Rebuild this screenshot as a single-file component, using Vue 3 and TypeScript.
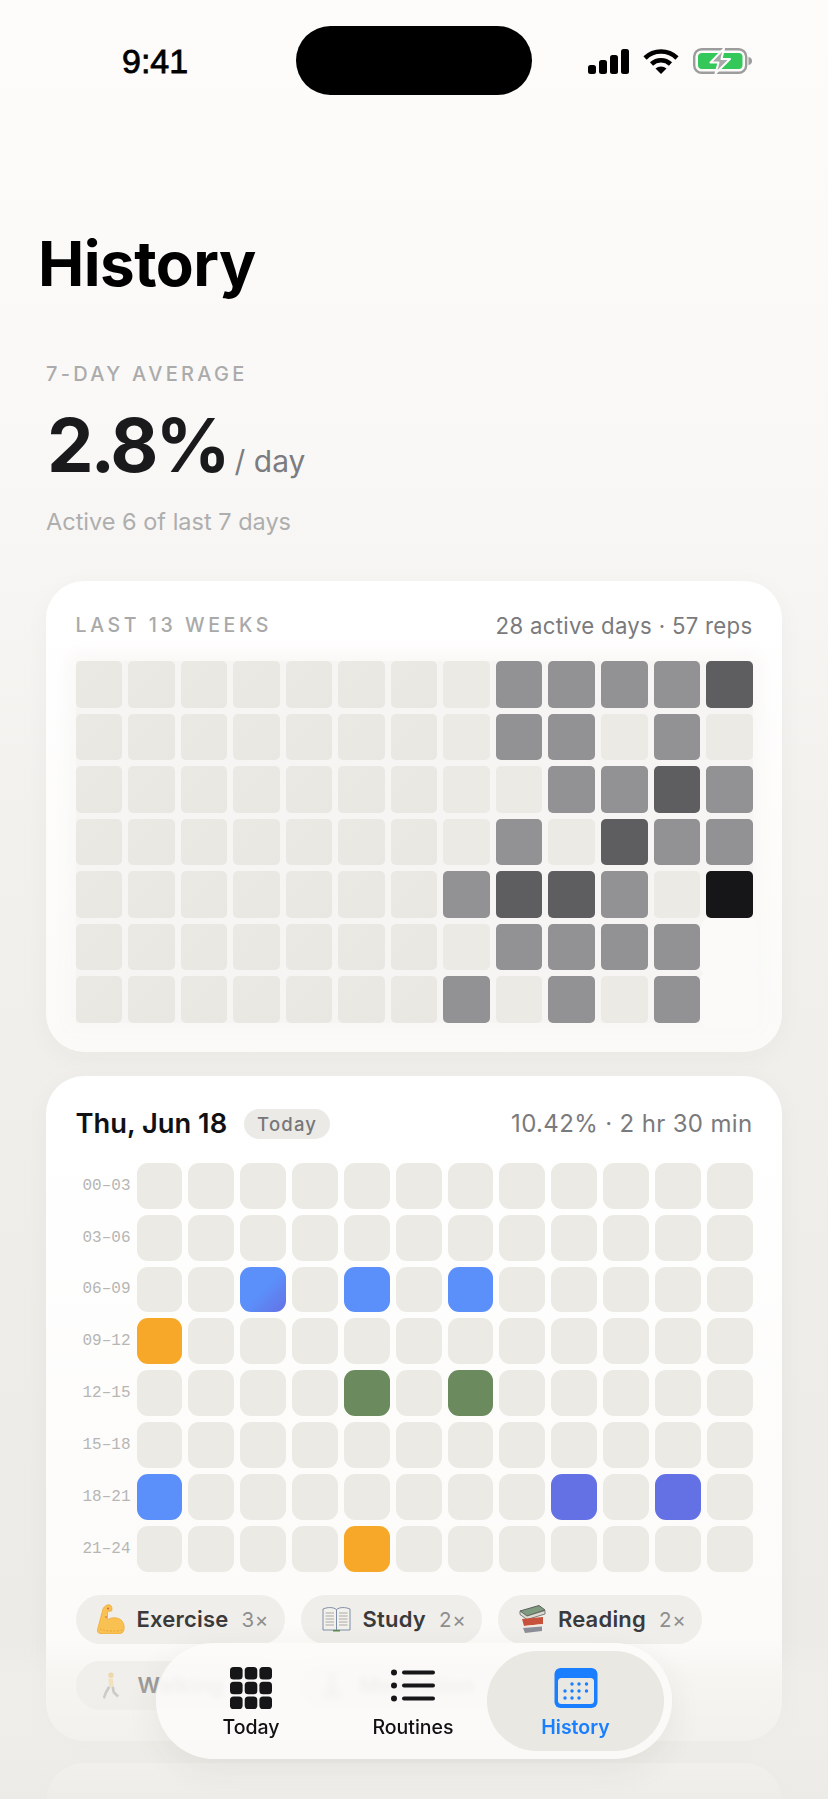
<script setup lang="ts">
const weekRows: string[] = [
  '.......emmmmd',
  '.......emmeme',
  '.......eemmdm',
  '.......emedmm',
  '.......mddmek',
  '.......emmmm ',
  '.......memem ',
]

const hourLabels: string[] = ['00–03', '03–06', '06–09', '09–12', '12–15', '15–18', '18–21', '21–24']

// one letter per slot: b blue, g gradient, o orange, s green, i indigo
const hourRows: string[] = [
  '............',
  '............',
  '..g.b.b.....',
  'o...........',
  '....s.s.....',
  '............',
  'b.......i.i.',
  '....o.......',
]

const kinds: Record<string, string> = {
  '.': 'none', e: 'light', m: 'mid', d: 'dark', k: 'black', ' ': 'blank',
  b: 'blue', g: 'mix', o: 'orange', s: 'green', i: 'indigo',
}

const kind = (ch: string): string => kinds[ch] ?? 'none'
</script>

<template>
  <div class="page">
    <div class="status">
      <span class="clock">9:41</span>
      <div class="island"></div>
      <div class="status-icons">
        <svg width="41" height="25" viewBox="0 0 41 25">
          <rect x="0" y="16" width="8" height="9" rx="2.5" />
          <rect x="11" y="11" width="8" height="14" rx="2.5" />
          <rect x="22" y="6" width="8" height="19" rx="2.5" />
          <rect x="33" y="0" width="8" height="25" rx="2.5" />
        </svg>
        <svg width="36" height="25" viewBox="0 0 36 25">
          <path d="M2 9 A23 23 0 0 1 34 9" fill="none" stroke="#000" stroke-width="4.6" />
          <path d="M8.5 15 A14 14 0 0 1 27.5 15" fill="none" stroke="#000" stroke-width="4.6" />
          <path d="M18 25 L12.5 19.6 A8 8 0 0 1 23.5 19.6 Z" />
        </svg>
        <svg width="60" height="26" viewBox="0 0 60 26">
          <rect x="1.2" y="1.2" width="52" height="23.6" rx="7.5" fill="none" stroke="#9c9c9c" stroke-width="2.4" />
          <rect x="5" y="5" width="44.5" height="16" rx="4" fill="#34c759" />
          <path d="M55.5 9 C58 9.5 59 11 59 13 C59 15 58 16.5 55.5 17 Z" fill="#9c9c9c" />
          <path d="M31 0.5 L17.5 14.5 H25.5 L22.5 25.5 L37 11 H28.5 Z" fill="#a9a9a9" stroke="#fdfcfb" stroke-width="2" stroke-linejoin="round" />
        </svg>
      </div>
    </div>

    <h1 class="title">History</h1>

    <section class="summary">
      <div class="eyebrow">7-DAY AVERAGE</div>
      <div class="avg"><span class="avg-num">2.8%</span><span class="avg-unit">/ day</span></div>
      <div class="avg-note">Active 6 of last 7 days</div>
    </section>

    <section class="card weeks">
      <header class="card-head">
        <span class="weeks-title">LAST 13 WEEKS</span>
        <span class="meta">28 active days · 57 reps</span>
      </header>
      <div class="week-grid">
        <template v-for="(row, r) in weekRows" :key="r">
          <div v-for="(ch, c) in row.split('')" :key="c" class="wcell" :class="kind(ch)"></div>
        </template>
      </div>
    </section>

    <section class="card day">
      <header class="card-head">
        <div class="day-left">
          <span class="day-title">Thu, Jun 18</span>
          <span class="badge">Today</span>
        </div>
        <span class="meta day-meta">10.42% · 2 hr 30 min</span>
      </header>
      <div class="hour-grid">
        <template v-for="(row, r) in hourRows" :key="r">
          <span class="hour-label">{{ hourLabels[r] }}</span>
          <div v-for="(ch, c) in row.split('')" :key="c" class="hcell" :class="kind(ch)"></div>
        </template>
      </div>
      <div class="chips">
        <div class="chip">
          <svg class="chip-icon" width="28" height="30" viewBox="0 0 28 30">
            <path d="M6 5 C7 2 11 0 13 1 C15 2 15.5 5 14.5 7 C13 7.5 11.5 7 10.5 8 L10.5 16 C14 13 20 13 24 16 C27.5 19 28 25 26 28 C25 29.5 22 30 18 30 L3 29.5 C0.5 29 0 27 0.7 25 Z" fill="#f8c152" stroke="#eeaa38" stroke-width="0.8" />
            <circle cx="11" cy="4.5" r="0.9" fill="#d9553a" />
            <circle cx="9" cy="13" r="0.8" fill="#d9553a" />
            <path d="M3 25 C8 27 18 28 25 26" fill="none" stroke="#e89a2c" stroke-width="0.9" stroke-dasharray="1.5 2" />
          </svg>
          <span class="chip-name">Exercise</span><span class="chip-count">3×</span>
        </div>
        <div class="chip">
          <svg class="chip-icon" width="29" height="26" viewBox="0 0 29 26">
            <path d="M1 3 C6 1 11 1 14.5 3.5 V24 H1 Z" fill="#f3f1ec" stroke="#7f8ea8" stroke-width="1" />
            <path d="M28 3 C23 1 18 1 14.5 3.5 V24 H28 Z" fill="#f3f1ec" stroke="#7f8ea8" stroke-width="1" />
            <path d="M3.5 7 H12 M3.5 10 H12 M3.5 13 H12 M3.5 16 H12 M3.5 19 H12 M17 7 H25.5 M17 10 H25.5 M17 13 H25.5 M17 16 H25.5 M17 19 H25.5" stroke="#a9a9a6" stroke-width="1" />
            <path d="M11 24 H18 V25.5 H11 Z" fill="#5c8a4a" />
          </svg>
          <span class="chip-name">Study</span><span class="chip-count">2×</span>
        </div>
        <div class="chip">
          <svg class="chip-icon" width="27" height="28" viewBox="0 0 27 28">
            <path d="M1 6 L20 0.5 L26 5 L8 11 Z" fill="#7f9c80" stroke="#5c5f5c" stroke-width="1" />
            <path d="M8 11 L26 5.5 V9 L8 14.5 L1 9.5 V6 Z" fill="#dedbd2" stroke="#5c5f5c" stroke-width="0.8" />
            <path d="M3 14 L24 12 V19 L5 21 Z" fill="#c8513c" />
            <path d="M5 21 L24 19 V21 L6 23 Z" fill="#efe9df" />
            <path d="M4 23 L23 21.5 V26 L6 28 Z" fill="#8d8f98" />
          </svg>
          <span class="chip-name">Reading</span><span class="chip-count">2×</span>
        </div>
        <div class="chip">
          <svg class="chip-icon walker" width="16" height="30" viewBox="0 0 18 30">
            <circle cx="9" cy="4" r="3" fill="#e9bf6c" />
            <path d="M6 8 H11 L12 17 H7 Z" fill="#f0d28a" />
            <path d="M7 17 L3 24 L1 30 M11 17 L12 23 L17 28" fill="none" stroke="#9b9b9b" stroke-width="3" />
          </svg>
          <span class="chip-name">Walking</span><span class="chip-count">2×</span>
        </div>
        <div class="chip">
          <svg class="chip-icon" width="30" height="30" viewBox="0 0 30 30">
            <circle cx="15" cy="6" r="4.5" fill="#9a9a96" />
            <path d="M11 11 H19 L22 21 L29 27 Q15 32 1 27 L8 21 Z" fill="#9a9a96" />
          </svg>
          <span class="chip-name">Meditation</span><span class="chip-count">1×</span>
        </div>
      </div>
    </section>

    <section class="card rest"></section>

    <div class="fade"></div>

    <nav class="tabs">
      <div class="tab">
        <svg width="42" height="42" viewBox="0 0 42 42" fill="#161618">
          <rect x="0" y="0" width="12.6" height="12.6" rx="3.6" />
          <rect x="14.7" y="0" width="12.6" height="12.6" rx="3.6" />
          <rect x="29.4" y="0" width="12.6" height="12.6" rx="3.6" />
          <rect x="0" y="14.7" width="12.6" height="12.6" rx="3.6" />
          <rect x="14.7" y="14.7" width="12.6" height="12.6" rx="3.6" />
          <rect x="29.4" y="14.7" width="12.6" height="12.6" rx="3.6" />
          <rect x="0" y="29.4" width="12.6" height="12.6" rx="3.6" />
          <rect x="14.7" y="29.4" width="12.6" height="12.6" rx="3.6" />
          <rect x="29.4" y="29.4" width="12.6" height="12.6" rx="3.6" />
        </svg>
        <span class="tab-label">Today</span>
      </div>
      <div class="tab">
        <svg width="44" height="42" viewBox="0 0 44 42" fill="#161618">
          <circle cx="3" cy="5.5" r="3" />
          <circle cx="3" cy="18.5" r="3" />
          <circle cx="3" cy="31.5" r="3" />
          <rect x="11" y="3.5" width="33" height="4" rx="2" />
          <rect x="11" y="16.5" width="33" height="4" rx="2" />
          <rect x="11" y="29.5" width="33" height="4" rx="2" />
        </svg>
        <span class="tab-label">Routines</span>
      </div>
      <div class="tab active">
        <svg width="44" height="42" viewBox="0 0 44 42">
          <rect x="0.5" y="1" width="43" height="40" rx="6" fill="#1a7fff" />
          <rect x="4" y="11" width="36" height="26" rx="3.5" fill="#e9e8e3" />
          <g fill="#1a7fff">
            <circle cx="18" cy="17" r="1.7" /><circle cx="25" cy="17" r="1.7" /><circle cx="32.5" cy="17" r="1.7" />
            <circle cx="11" cy="24" r="1.7" /><circle cx="18" cy="24" r="1.7" /><circle cx="25" cy="24" r="1.7" /><circle cx="32.5" cy="24" r="1.7" />
            <circle cx="11" cy="31" r="1.7" /><circle cx="18" cy="31" r="1.7" /><circle cx="25" cy="31" r="1.7" />
          </g>
        </svg>
        <span class="tab-label">History</span>
      </div>
    </nav>
  </div>
</template>

<style scoped>
.page {
  position: relative;
  width: 828px;
  height: 1799px;
  overflow: hidden;
  font-family: Inter, "Noto Sans", sans-serif;
  background: linear-gradient(180deg, #fdfcfb 0%, #f9f8f6 25%, #f2f1ee 45%, #eeede9 70%, #ebeae6 100%);
}

.status { position: relative; height: 120px; }
.clock {
  position: absolute; left: 122px; top: 41px;
  font: 400 34px/40px "Liberation Sans", Arial, sans-serif;
  -webkit-text-stroke: .8px #000;
  color: #000;
}
.island {
  position: absolute; left: 296px; top: 26px;
  width: 236px; height: 69px;
  border-radius: 35px; background: #000;
}
.status-icons {
  position: absolute; left: 588px; top: 48px;
  display: flex; align-items: center; gap: 14px;
}

.title {
  margin: 107px 0 0 38px;
  font-size: 62px; line-height: 74px; font-weight: 700;
  letter-spacing: -.55px; color: #000;
}

.summary { margin: 0 46px; padding-top: 59px; }
.eyebrow {
  font-size: 20px; line-height: 28px; font-weight: 500;
  letter-spacing: 3.3px; color: #ababab;
}
.avg { display: flex; align-items: baseline; margin-top: 15px; line-height: 84px; }
.avg-num { font-size: 74px; font-weight: 700; letter-spacing: -3px; color: #1a1a1c; margin-left: 1px; }
.avg-unit { font-size: 30px; margin-left: 7px; color: #7c7c80; }
.avg-note { margin-top: 3px; font-size: 23.5px; line-height: 32px; color: #aeaeae; }

.card {
  margin: 0 46px;
  padding: 0 29.5px;
  border-radius: 38px;
  background: linear-gradient(180deg, #fff 0%, #fbfaf8 100%);
  box-shadow: 0 6px 26px rgba(60, 55, 40, .035);
}
.weeks { margin-top: 43px; padding-top: 29px; padding-bottom: 29px; }
.card-head { display: flex; justify-content: space-between; align-items: center; height: 30px; }
.weeks-title { font-size: 19.5px; font-weight: 500; letter-spacing: 3.6px; color: #a9a9a9; }
.meta { font-size: 22.2px; letter-spacing: .3px; color: #7a7a7c; }
.day-meta { font-size: 24px; letter-spacing: .35px; }

.week-grid {
  display: grid; grid-template-columns: repeat(13, 1fr); gap: 6px;
  margin-top: 21px;
  background: #f6f5f3;
  box-shadow: 0 0 18px 6px #f8f7f5;
}
.wcell { aspect-ratio: 1; border-radius: 5px; }
.wcell.none { background: linear-gradient(135deg, #eae9e4 0%, #e8e7e1 100%); }
.wcell.light { background: #ebeae5; }
.wcell.mid { background: #929294; }
.wcell.dark { background: #5e5e60; }
.wcell.black { background: #161618; }
.wcell.blank { background: #fbfaf8; box-shadow: 0 0 0 6px #fbfaf8; }

.day { margin-top: 24px; padding-top: 33px; padding-bottom: 31px; }
.day-left { display: flex; align-items: center; gap: 17px; }
.day-title { font-size: 27.3px; font-weight: 600; color: #111113; }
.badge {
  padding: 0 13px; height: 30px; line-height: 30px;
  border-radius: 15px; background: #ebeae6;
  font-size: 18.5px; font-weight: 500; letter-spacing: 1.2px; color: #77777a;
}

.hour-grid {
  display: grid; grid-template-columns: 55px repeat(12, 1fr); gap: 6px;
  margin-top: 24px;
}
.hour-label {
  align-self: center; text-align: right; white-space: nowrap;
  font: 16px "Liberation Mono", monospace; color: #b6b6b4;
}
.hcell { aspect-ratio: 1; border-radius: 11px; }
.hcell.none { background: #eceae4; }
.hcell.blue { background: #5b90fb; }
.hcell.mix { background: linear-gradient(135deg, #5b90fb 50%, #6471e4 100%); }
.hcell.orange { background: #f7a829; }
.hcell.green { background: #6b8a5e; }
.hcell.indigo { background: #6471e4; }

.chips { display: flex; flex-wrap: wrap; gap: 17px 16px; margin-top: 23px; }
.chip {
  display: flex; align-items: center; height: 49px;
  padding: 0 15.5px 0 21px;
  border-radius: 25px; background: #efeeea;
}
.chip-icon { margin-right: 12px; }
.chip-icon.walker { margin-left: 6px; margin-right: 19px; }
.chip-name { font-size: 22px; font-weight: 600; color: #3a3a3c; letter-spacing: .2px; }
.chip-count { margin-left: 13px; font-size: 20.5px; letter-spacing: .7px; color: #8e8e8e; }

.rest { margin-top: 22px; height: 300px; }

.fade {
  position: absolute; left: 0; right: 0; top: 1640px; bottom: 0;
  background: linear-gradient(180deg, rgba(241, 240, 236, 0) 0, rgba(241, 240, 236, .5) 35px, rgba(239, 238, 234, .75) 100px, rgba(236, 235, 231, .92) 159px);
  pointer-events: none;
}

.tabs {
  position: absolute; left: 156px; bottom: 40px;
  display: flex; box-sizing: border-box;
  width: 516px; height: 116px;
  padding: 8px 8px 8px 14px;
  border-radius: 58px;
  background: rgba(252, 251, 249, .88);
  backdrop-filter: blur(3px);
  box-shadow: 0 10px 34px rgba(60, 55, 40, .07);
}
.tab {
  flex: 0 0 162px; box-sizing: border-box;
  display: flex; flex-direction: column; align-items: center;
  padding-top: 16px; border-radius: 50px;
}
.tab.active { flex: 0 0 177px; margin-left: -7px; background: #e9e8e3; }
.tab-label { margin-top: 6px; font-size: 19.5px; line-height: 24px; font-weight: 500; color: #111113; }
.tab.active .tab-label { font-weight: 600; color: #1a7fff; }
</style>

<style>
html, body { margin: 0; background: #ebeae6; }
</style>
